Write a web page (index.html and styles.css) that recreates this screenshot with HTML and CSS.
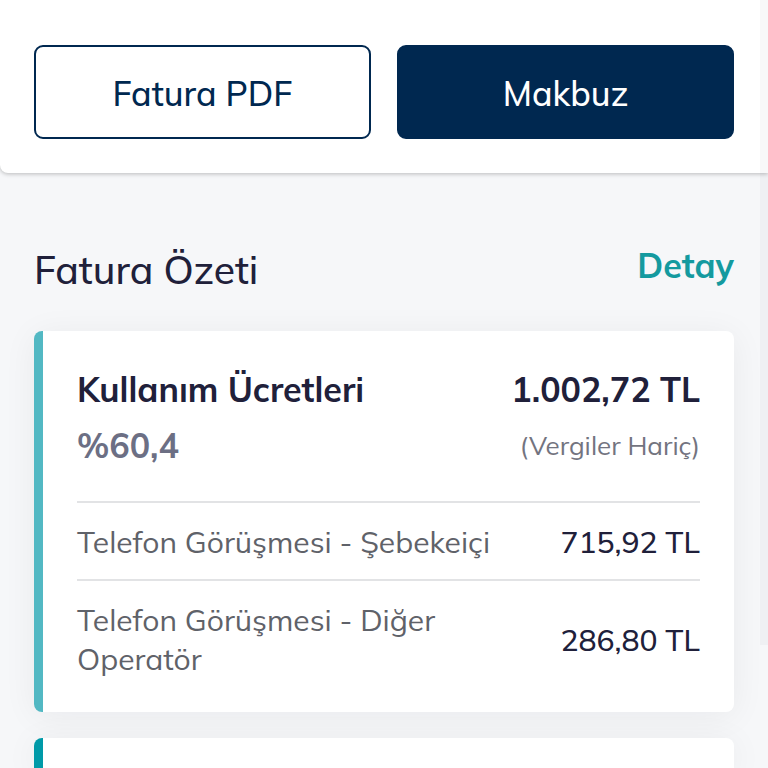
FILE: index.html
```html
<!DOCTYPE html>
<html lang="tr">
<head>
  <meta charset="UTF-8">
  <meta name="viewport" content="width=device-width, initial-scale=1">
  <title>Fatura Özeti</title>
  <link rel="stylesheet" href="styles.css">
</head>
<body>

<header class="actions">
  <button type="button" class="btn btn-outline">Fatura PDF</button>
  <button type="button" class="btn btn-primary">Makbuz</button>
</header>

<main class="summary">
  <div class="summary-head">
    <h1>Fatura Özeti</h1>
    <a href="#detay">Detay</a>
  </div>

  <section class="card">
    <div class="card-row">
      <h2>Kullanım Ücretleri</h2>
      <strong class="total">1.002,72 TL</strong>
    </div>
    <div class="card-row">
      <span class="percent">%60,4</span>
      <span class="note">(Vergiler Hariç)</span>
    </div>
    <table class="items">
      <tbody>
        <tr><th scope="row">Telefon Görüşmesi - Şebekeiçi</th><td>715,92 TL</td></tr>
        <tr><th scope="row">Telefon Görüşmesi - Diğer Operatör</th><td>286,80 TL</td></tr>
      </tbody>
    </table>
  </section>

  <section class="card card-dark"></section>
</main>

<div class="scroll-thumb"></div>

</body>
</html>
```
FILE: styles.css
```css
* { box-sizing: border-box; }
html { height: 100%; overflow: hidden; }
body { height: 100%; margin: 0; overflow: hidden; display: flex; flex-direction: column; background: #f6f7f9; color: #20203a; font-family: Mulish, Lato, sans-serif; }

.actions { display: flex; gap: 26px; padding: 45px 34px 34px; background: #fff; border-radius: 0 0 0 8px; box-shadow: 0 1px 4px rgba(0,0,0,.25); }
.btn { flex: 1; height: 94px; padding: 3px 0 0; border: 2px solid #002850; border-radius: 9px; font-family: inherit; font-size: 34px; font-weight: 500; line-height: 44px; cursor: pointer; }
.btn-outline { background: #fff; color: #002850; }
.btn-primary { background: #002850; color: #fff; }

.summary { flex: 1; display: flex; flex-direction: column; gap: 26px; padding: 64px 34px 0; }
.summary-head { display: flex; justify-content: space-between; align-items: flex-start; height: 68px; }
.summary-head h1 { margin: 0; font-size: 39px; font-weight: 500; line-height: 66px; }
.summary-head a { color: #149a9f; font-size: 34px; font-weight: 700; line-height: 58px; text-decoration: none; }

.card { padding: 30px 34px 16px; border-left: 9px solid #52b8c3; border-radius: 8px; background: #fff; box-shadow: 0 4px 34px rgba(0,20,40,.06); }
.card-dark { flex: 1 0 30px; padding: 0; border-left-color: #009aa8; border-radius: 8px 8px 0 0; }
.card-row { display: flex; justify-content: space-between; align-items: center; height: 56px; }
.card-row h2, .total, .percent { margin: 0; font-size: 34px; font-weight: 700; }
.percent { color: #6c6f84; }
.note { color: #73747f; font-size: 26px; }

.items { width: 100%; margin-top: 28px; border-collapse: collapse; font-size: 30px; line-height: 39px; }
.items th, .items td { padding: 20px 0 17px; border-top: 2px solid #e2e3e5; vertical-align: middle; font-weight: 400; }
.items th { padding-right: 60px; color: #5f6269; text-align: left; }
.items td { font-weight: 500; text-align: right; white-space: nowrap; }

.scroll-thumb { position: absolute; top: 0; right: 0; width: 8px; height: 84vh; background: rgba(20,20,60,.03); }
```
